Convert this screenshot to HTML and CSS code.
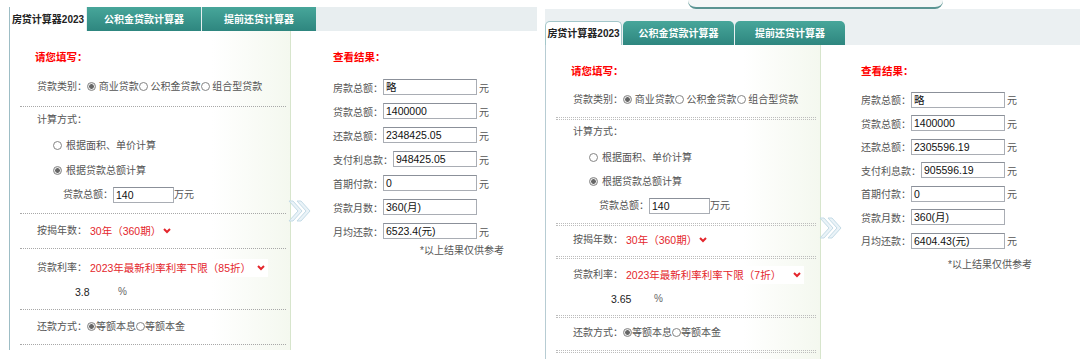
FILE: index.html
```html
<!DOCTYPE html>
<html lang="zh-CN">
<head>
    <meta charset="UTF-8">
    <meta name="viewport" content="width=device-width, initial-scale=1.0">
    <title>房贷计算器2023</title>
    <link rel="stylesheet" href="styles.css">
</head>
<body>
    <div class="shots">
        <!-- First calculator (85折) -->
        <div class="calc calc-a">
            <div class="tabs">
                <div class="tab t1 active">房贷计算器2023</div>
                <div class="tab t2">公积金贷款计算器</div>
                <div class="tab t3">提前还贷计算器</div>
            </div>
            <div class="panel">
                <div class="form-col">
                    <div class="title">请您填写：</div>
                    <div class="row r-type">贷款类别：<span class="radio on"></span> 商业贷款<span class="radio"></span> 公积金贷款<span class="radio"></span> 组合型贷款</div>
                    <div class="sep s1"></div>
                    <div class="row r-mode">计算方式：</div>
                    <div class="row r-opt"><span class="radio"></span>根据面积、单价计算</div>
                    <div class="row r-opt"><span class="radio on"></span>根据贷款总额计算</div>
                    <div class="row r-amount">贷款总额：<span class="input w-amount">140</span>万元</div>
                    <div class="sep s2"></div>
                    <div class="row r-years">按揭年数：<span class="select s-years">30年（360期）<svg class="caret" width="8" height="6" viewBox="0 0 8 6"><path d="M1 1l3 3 3-3" fill="none" stroke="#e4262c" stroke-width="2"/></svg></span></div>
                    <div class="sep"></div>
                    <div class="row r-rate">贷款利率：<span class="select s-rate">2023年最新利率利率下限（85折）<svg class="caret" width="8" height="6" viewBox="0 0 8 6"><path d="M1 1l3 3 3-3" fill="none" stroke="#e4262c" stroke-width="2"/></svg></span></div>
                    <div class="row r-rate-val"><span class="rate-box">3.8</span><span class="pct">%</span></div>
                    <div class="sep s4"></div>
                    <div class="row r-pay">还款方式：<span class="radio on"></span>等额本息<span class="radio"></span>等额本金</div>
                    <div class="sep"></div>
                </div>

                <div class="arrow">
                    <svg width="24" height="22" viewBox="0 0 24 22">
                        <path d="M1 1h4l9 10-9 10H1l9-10z" fill="#eaf3f8" stroke="#c4dbe6"/>
                        <path d="M9 1h4l9 10-9 10H9l9-10z" fill="#eaf3f8" stroke="#c4dbe6"/>
                    </svg>
                </div>

                <div class="result-col">
                    <div class="result-box">
                        <div class="title">查看结果：</div>
                        <div class="res-list">
                            <div class="res-row"><span class="res-label">房款总额：</span><span class="input w-res">略</span><span class="unit">元</span></div>
                            <div class="res-row"><span class="res-label">贷款总额：</span><span class="input w-res">1400000</span><span class="unit">元</span></div>
                            <div class="res-row"><span class="res-label">还款总额：</span><span class="input w-res">2348425.05</span><span class="unit">元</span></div>
                            <div class="res-row"><span class="res-label">支付利息款：</span><span class="input w-res">948425.05</span><span class="unit">元</span></div>
                            <div class="res-row"><span class="res-label">首期付款：</span><span class="input w-res">0</span><span class="unit">元</span></div>
                            <div class="res-row"><span class="res-label">贷款月数：</span><span class="input w-res">360(月)</span><span class="unit blank">元</span></div>
                            <div class="res-row"><span class="res-label">月均还款：</span><span class="input w-res">6523.4(元)</span><span class="unit">元</span></div>
                        </div>
                        <div class="note">*以上结果仅供参考</div>
                    </div>
                </div>
            </div>
        </div>

        <!-- Second calculator (7折) -->
        <div class="calc calc-b">
            <div class="topband"><div class="topline"></div></div>
            <div class="tabs">
                <div class="tab t1 active">房贷计算器2023</div>
                <div class="tab t2">公积金贷款计算器</div>
                <div class="tab t3">提前还贷计算器</div>
            </div>
            <div class="panel">
                <div class="form-col">
                    <div class="title">请您填写：</div>
                    <div class="row r-type">贷款类别：<span class="radio on"></span> 商业贷款<span class="radio"></span> 公积金贷款<span class="radio"></span> 组合型贷款</div>
                    <div class="sep s1"></div>
                    <div class="row r-mode">计算方式：</div>
                    <div class="row r-opt"><span class="radio"></span>根据面积、单价计算</div>
                    <div class="row r-opt"><span class="radio on"></span>根据贷款总额计算</div>
                    <div class="row r-amount">贷款总额：<span class="input w-amount">140</span>万元</div>
                    <div class="sep s2"></div>
                    <div class="row r-years">按揭年数：<span class="select s-years">30年（360期）<svg class="caret" width="8" height="6" viewBox="0 0 8 6"><path d="M1 1l3 3 3-3" fill="none" stroke="#e4262c" stroke-width="2"/></svg></span></div>
                    <div class="sep"></div>
                    <div class="row r-rate">贷款利率：<span class="select s-rate">2023年最新利率利率下限（7折）<svg class="caret" width="8" height="6" viewBox="0 0 8 6"><path d="M1 1l3 3 3-3" fill="none" stroke="#e4262c" stroke-width="2"/></svg></span></div>
                    <div class="row r-rate-val"><span class="rate-box">3.65</span><span class="pct">%</span></div>
                    <div class="sep s4"></div>
                    <div class="row r-pay">还款方式：<span class="radio on"></span>等额本息<span class="radio"></span>等额本金</div>
                    <div class="sep"></div>
                </div>

                <div class="arrow">
                    <svg width="24" height="22" viewBox="0 0 24 22">
                        <path d="M1 1h4l9 10-9 10H1l9-10z" fill="#eaf3f8" stroke="#c4dbe6"/>
                        <path d="M9 1h4l9 10-9 10H9l9-10z" fill="#eaf3f8" stroke="#c4dbe6"/>
                    </svg>
                </div>

                <div class="result-col">
                    <div class="result-box">
                        <div class="title">查看结果：</div>
                        <div class="res-list">
                            <div class="res-row"><span class="res-label">房款总额：</span><span class="input w-res">略</span><span class="unit">元</span></div>
                            <div class="res-row"><span class="res-label">贷款总额：</span><span class="input w-res">1400000</span><span class="unit">元</span></div>
                            <div class="res-row"><span class="res-label">还款总额：</span><span class="input w-res">2305596.19</span><span class="unit">元</span></div>
                            <div class="res-row"><span class="res-label">支付利息款：</span><span class="input w-res">905596.19</span><span class="unit">元</span></div>
                            <div class="res-row"><span class="res-label">首期付款：</span><span class="input w-res">0</span><span class="unit">元</span></div>
                            <div class="res-row"><span class="res-label">贷款月数：</span><span class="input w-res">360(月)</span><span class="unit blank">元</span></div>
                            <div class="res-row"><span class="res-label">月均还款：</span><span class="input w-res">6404.43(元)</span><span class="unit">元</span></div>
                        </div>
                        <div class="note">*以上结果仅供参考</div>
                    </div>
                </div>
            </div>
        </div>
    </div>
</body>
</html>
```

FILE: styles.css
```css
/* Page */
* {
    box-sizing: border-box;
}

body {
    margin: 0;
    background: #fff;
    font-family: "Liberation Sans", "Noto Sans CJK SC", sans-serif;
    font-size: 10px;
    color: #555;
}

.shots {
    display: flex;
    align-items: flex-start;
    width: 1080px;
    height: 359px;
    overflow: hidden;
}

.calc-a {
    margin: 7px 0 0 9px;
    width: 528px;
}

.calc-b {
    margin-left: 8px;
    flex: 1;
}

/* Strip above the second calculator */
.topband {
    height: 9px;
}

.topline {
    margin-left: 143px;
    width: 255px;
    height: 9px;
    background: #f4f7f7;
    border-bottom: 2px solid #5a9492;
    border-radius: 0 0 8px 8px;
}

/* Tabs */
.tabs {
    display: flex;
    gap: 1px;
    height: 24px;
    background: #e8eef0;
}

.calc-b .tabs {
    height: 36px;
    padding-top: 12px;
    background: #ebf0f2;
}

.tab {
    display: flex;
    align-items: center;
    justify-content: center;
    padding-bottom: 2px;
    font-weight: bold;
    color: #fff;
    background: linear-gradient(#47a69a, #2e867f);
}

.tab.active {
    background: #fff;
    color: #222;
    border-left: 1px solid #9dbdc5;
}

.t1 { width: 77px; }
.t2 { width: 114px; }
.t3 { width: 114px; }

.calc-b .t2 { width: 111px; }
.calc-b .t3 { width: 110px; }

.calc-b .tab {
    border-radius: 5px 5px 0 0;
}

.calc-b .tab.active {
    border: 1px solid #a3c7ca;
    border-bottom: none;
}

/* Panel */
.panel {
    display: flex;
    position: relative;
    border-left: 1px solid #9dbdc5;
}

.calc-b .panel {
    border-left-color: #b7ccd3;
}

.form-col {
    width: 281px;
    padding: 12px 0 5px;
    border-right: 1px solid #d7e5cc;
    background: linear-gradient(to right, #fff 72%, #f4f8ef);
}

.calc-b .form-col {
    width: 275px;
    padding-bottom: 10px;
}

.title {
    color: #f00;
    font-weight: bold;
    font-size: 10.5px;
    line-height: 28px;
    padding-left: 25px;
}

.row {
    white-space: nowrap;
    padding-left: 27px;
}

.r-type { line-height: 32px; }
.r-mode { line-height: 26px; }
.r-opt { line-height: 25px; padding-left: 43px; }
.r-amount { line-height: 24px; padding-left: 53px; }
.r-years { line-height: 34px; }
.r-rate { line-height: 24px; margin-top: 7px; }
.r-rate-val { line-height: 24px; padding-left: 60px; }
.r-pay { line-height: 34px; }

.calc-b .r-type { line-height: 30px; }
.calc-b .r-mode { line-height: 28px; }
.calc-b .r-opt { line-height: 24px; }
.calc-b .r-years { line-height: 32px; }
.calc-b .r-rate { margin-top: 6px; }

/* Dotted separators */
.sep {
    height: 0;
    margin: 0 4px 0 10px;
    border-top: 1px dotted #a8a8a8;
}

.sep.s1 { margin-top: 3px; }
.sep.s2 { margin-top: 6px; }
.sep.s4 { margin-top: 5px; }

.calc-b .sep {
    height: 3px;
    margin-bottom: -2px;
    border-top-color: #bdbdbd;
    border-bottom: 1px dotted #bdbdbd;
}

.calc-b .sep.s1 { margin-top: 2px; }
.calc-b .sep.s2 { margin-top: 5px; }
.calc-b .sep.s4 { margin-top: 4px; }

/* Radios */
.radio {
    display: inline-block;
    width: 9px;
    height: 9px;
    border: 1px solid #858585;
    border-radius: 50%;
    background: #fff;
    vertical-align: -1px;
}

.radio.on {
    background: radial-gradient(circle, #666 0 2px, #e6e6e6 2.6px);
}

.r-opt .radio {
    margin-right: 4px;
}

/* Inputs */
.input {
    display: inline-block;
    height: 16px;
    line-height: 14px;
    padding-left: 2px;
    border: 1px solid #a9adb4;
    border-top-color: #8b9099;
    background: #fff;
    color: #111;
    font-size: 10.5px;
    vertical-align: middle;
    white-space: nowrap;
    overflow: hidden;
}

.w-amount { width: 61px; }
.w-res { width: 97px; }

.rate-box {
    display: inline-block;
    width: 45px;
    height: 16px;
    line-height: 16px;
    padding-left: 5px;
    background: #fff;
    color: #222;
    font-size: 10.5px;
    vertical-align: middle;
}

.pct {
    margin-left: 3px;
    color: #666;
}

/* Dropdowns */
.select {
    display: inline-flex;
    align-items: center;
    justify-content: space-between;
    height: 18px;
    padding: 0 3px 0 3px;
    background: #fff;
    color: #e4262c;
    font-size: 10.5px;
    vertical-align: middle;
}

.s-years { width: 87px; }
.s-rate { width: 181px; }

/* Arrow between columns */
.arrow {
    position: absolute;
    left: 278px;
    top: 169px;
    line-height: 0;
}

.calc-b .arrow {
    left: 273px;
    top: 172px;
}

/* Results */
.result-col {
    width: 240px;
}

.calc-b .result-col {
    width: 236px;
}

.result-box {
    width: 156px;
    margin: 0 auto;
    padding-top: 12px;
}

.result-box .title {
    padding-left: 0;
}

.res-list {
    margin-top: 4px;
}

.calc-b .res-list {
    margin-top: 3px;
}

.res-row {
    display: flex;
    justify-content: center;
    align-items: center;
    height: 24px;
    white-space: nowrap;
}

.calc-b .res-row {
    height: 23.5px;
}

.unit {
    margin-left: 2px;
}

.unit.blank {
    visibility: hidden;
}

.note {
    margin: 1px -15px 0 0;
    text-align: right;
    line-height: 14px;
    white-space: nowrap;
}

.calc-b .note {
    margin-top: 5px;
}
```
